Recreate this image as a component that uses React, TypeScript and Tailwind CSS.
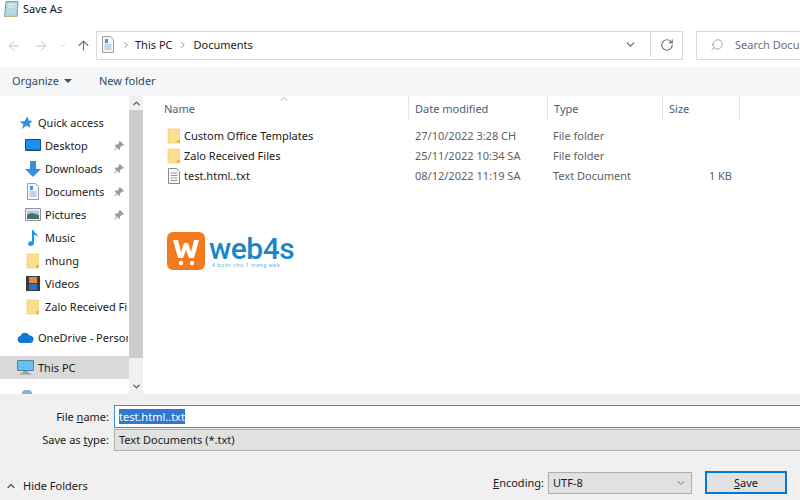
import React from 'react';
import { ArrowLeft, ArrowRight, ArrowUp, ChevronDown, ChevronRight, ChevronUp, RotateCw, Search } from 'lucide-react';

const font = "font-['Noto_Sans',sans-serif]";

const FolderIcon = () => (
  <svg width="14" height="16" viewBox="0 0 14 16" className="shrink-0">
    <path d="M1 1h11.5v14H1z" fill="#fcdf8c" stroke="#ecc666" strokeWidth="0.6" />
    <path d="M10 12h3v3h-3z" fill="#e9b949" />
  </svg>
);

const DocIcon = () => (
  <svg width="14" height="16" viewBox="0 0 14 16" className="shrink-0">
    <path d="M1.5.5h8l3 3v12h-11z" fill="#fafafa" stroke="#8a8a8a" />
    <path d="M3.5 5h7M3.5 7.5h7M3.5 10h7M3.5 12.500h7" stroke="#9a9a9a" />
  </svg>
);

const DocsIcon = () => (
  <svg width="14" height="17" viewBox="0 0 14 17" className="shrink-0">
    <path d="M1.5.5h8l3 3v13h-11z" fill="#f4f7fa" stroke="#9aa0a6" />
    <path d="M4 3h3v4H4z" fill="#3f9be0" />
    <path d="M3.5 9h7M3.5 11h7M3.5 13h7" stroke="#8fb4d0" />
  </svg>
);

const NotebookIcon = () => (
  <svg width="16" height="16" viewBox="0 0 16 16" className="shrink-0">
    <path d="M3 .5h12l-1 15H1.500z" fill="#b5d8de" stroke="#7e9ea6" />
    <path d="M1.500 15.500h12.500" stroke="#c9b27a" strokeWidth="1.500" />
    <path d="M5 3.500h7M5 6h7" stroke="#e3f1f3" />
  </svg>
);

const StarIcon = () => (
  <svg width="14" height="14" viewBox="0 0 14 14" className="shrink-0">
    <path d="M8.500.5l1.200 4 3.800.4-3 2.600 1 4.400-3.800-2.500L3 13l1.400-4.600L.8 5.600l4.600-.4z" fill="#2f8fe0" />
  </svg>
);

const DesktopIcon = () => (
  <svg width="16" height="13" viewBox="0 0 16 13" className="shrink-0">
    <path d="M.5.5h15v11H.5z" fill="#1c8ff0" stroke="#15507f" />
    <path d="M1 10.500h14v1.500H1z" fill="#15507f" />
  </svg>
);

const DownloadIcon = () => (
  <svg width="16" height="16" viewBox="0 0 16 16" className="shrink-0">
    <path d="M5 0h6v8h5l-8 8-8-8h5z" fill="#3a8ee0" />
  </svg>
);

const PicturesIcon = () => (
  <svg width="16" height="13" viewBox="0 0 16 13" className="shrink-0">
    <path d="M.5.5h15v12H.5z" fill="#eef2f5" stroke="#8c949b" />
    <path d="M2 2.500h12v4H2z" fill="#a9cdea" />
    <path d="M2 6.500l5-1.500 7 2v4H2z" fill="#47705f" />
  </svg>
);

const MusicIcon = () => (
  <svg width="12" height="16" viewBox="0 0 12 16" className="shrink-0">
    <path d="M5 0h1.600c.3 3 4.400 3.600 4.400 7-1-1.500-2.500-2-4-2.300V13c0 1.800-1.500 3-3.300 3S1 15 1 13.500 2.500 11 5 11.200z" fill="#1c97ea" />
  </svg>
);

const VideosIcon = () => (
  <svg width="14" height="15" viewBox="0 0 14 15" className="shrink-0">
    <path d="M0 0h14v15H0z" fill="#3b3b3b" />
    <path d="M3 1h8v6H3z" fill="#e0893c" />
    <path d="M3 8h8v6H3z" fill="#2f6fc0" />
  </svg>
);

const CloudIcon = () => (
  <svg width="17" height="11" viewBox="0 0 17 11" className="shrink-0">
    <path d="M4 11a3.500 3.500 0 01-.6-6.900A5 5 0 0112.500 3.500 3.800 3.800 0 0113.500 11z" fill="#0f78d4" />
  </svg>
);

const PcIcon = () => (
  <svg width="17" height="15" viewBox="0 0 17 15" className="shrink-0">
    <path d="M.5.5h16v10H.5z" fill="#63c3f2" stroke="#5f7f93" />
    <path d="M6 11h5v2H6zM3 13h11v1.500H3z" fill="#8fa3ae" />
  </svg>
);

const PinIcon = () => (
  <svg width="10" height="10" viewBox="0 0 10 10" className="shrink-0">
    <path d="M6 0l4 4-1 .7-1-.3-2 2 .2 1.800-.8.8-2-2L.8 9.600 0 9.200l2.600-2.800-2-2 .8-.8 1.800.2 2-2-.3-1z" fill="#9a9a9a" />
  </svg>
);

const NavItem = ({ icon, label, pinned, top }: { icon: React.ReactNode; label: string; pinned?: boolean; top?: boolean }) => (
  <div className={`flex items-center h-[23px] ${top ? 'pl-[17px] gap-[4px]' : 'pl-[25px] gap-[5px]'} ${pinned ? 'pr-[5px]' : 'pr-[1px]'}`}>
    <span className={`${top ? 'w-[17px]' : 'w-[15px]'} flex justify-center shrink-0`}>{icon}</span>
    <span className="flex-1 whitespace-nowrap overflow-hidden text-[#1a1a1a]">{label}</span>
    {pinned && <PinIcon />}
  </div>
);

const FileRow = ({ icon, name, date, type, size }: { icon: React.ReactNode; name: string; date: string; type: string; size?: string }) => (
  <div className="flex items-center h-[20px]">
    <div className="w-[272px] pl-[24px] flex items-center gap-[3px]">
      {icon}
      <span className="whitespace-nowrap text-[#1a1a1a]">{name}</span>
    </div>
    <div className="w-[138px] text-[#5f5f5f] whitespace-nowrap">{date}</div>
    <div className="w-[115px] text-[#5f5f5f] whitespace-nowrap">{type}</div>
    <div className="w-[64px] text-right text-[#5f5f5f]">{size}</div>
  </div>
);

const ColHeader = ({ label, width }: { label: string; width: string }) => (
  <div className={`${width} h-full pl-[6px] pt-[5px] border-r border-[#e5e5e5] text-[#4c607a]`}>{label}</div>
);

export default function App() {
  return (
    <div className={`w-[800px] h-[500px] overflow-hidden bg-white text-[11px] leading-[16px] flex flex-col ${font}`}>
      <div className="h-[31px] shrink-0 flex items-center pl-[3px] gap-[4px] pb-[14px] text-[#111]">
        <NotebookIcon />
        <span>Save As</span>
      </div>

      <div className="h-[29px] shrink-0 flex items-center">
        <div className="w-[96px] shrink-0 flex items-center pl-[6px] text-[#c4c4c4]">
          <ArrowLeft size={16} strokeWidth={1.5} />
          <ArrowRight size={16} strokeWidth={1.5} className="ml-[11px]" />
          <ChevronDown size={9} strokeWidth={2} className="ml-[9px] text-[#c8c8c8]" />
          <ArrowUp size={15} strokeWidth={1.8} className="ml-[9px] text-[#707070]" />
        </div>
        <div className="w-[587px] shrink-0 h-full border border-[#d9d9d9] flex items-center pl-[4px] pb-[2px] text-[#1a1a1a]">
          <DocsIcon />
          <ChevronRight size={10} strokeWidth={2} className="ml-[6px] text-[#777]" />
          <span className="ml-[4px]">This PC</span>
          <ChevronRight size={10} strokeWidth={2} className="ml-[5px] text-[#777]" />
          <span className="ml-[6px]">Documents</span>
          <ChevronDown size={13} strokeWidth={2.4} className="ml-auto mr-[13px] text-[#6a6a6a]" />
          <div className="w-[32px] h-full border-l border-[#d9d9d9] flex items-center justify-center">
            <RotateCw size={14} strokeWidth={2} className="text-[#707070]" />
          </div>
        </div>
        <div className="w-[120px] shrink-0 h-full ml-[13px] border border-[#d9d9d9] flex items-center pl-[13px] pb-[2px] gap-[11px] text-[#6d6d6d] whitespace-nowrap overflow-hidden">
          <Search size={14} strokeWidth={1.3} className="-scale-x-100 text-[#8a8a8a] shrink-0" />
          <span>Search Documents</span>
        </div>
      </div>

      <div className="h-[7px] shrink-0" />

      <div className="h-[29px] shrink-0 bg-[#f5f6f7] flex items-center pb-[2px] text-[#2f4a66]">
        <span className="ml-[12px]">Organize</span>
        <svg width="8" height="4" viewBox="0 0 8 4" className="ml-[5px]">
          <path d="M0 0h8L4 4z" fill="#3c4f63" />
        </svg>
        <span className="ml-[27px]">New folder</span>
      </div>

      <div className="flex-1 min-h-0 flex">
        <div className="w-[129px] shrink-0 pt-[15px] overflow-hidden">
          <NavItem icon={<StarIcon />} label="Quick access" top />
          <NavItem icon={<DesktopIcon />} label="Desktop" pinned />
          <NavItem icon={<DownloadIcon />} label="Downloads" pinned />
          <NavItem icon={<DocsIcon />} label="Documents" pinned />
          <NavItem icon={<PicturesIcon />} label="Pictures" pinned />
          <NavItem icon={<MusicIcon />} label="Music" />
          <NavItem icon={<FolderIcon />} label="nhung" />
          <NavItem icon={<VideosIcon />} label="Videos" />
          <NavItem icon={<FolderIcon />} label="Zalo Received Files" />
          <div className="h-[8px]" />
          <NavItem icon={<CloudIcon />} label="OneDrive - Personal" top />
          <div className="mt-[7px] bg-[#d9d9d9]">
            <NavItem icon={<PcIcon />} label="This PC" top />
          </div>
          <div className="mt-[11px] pl-[22px]">
            <div className="w-[10px] h-[4px] rounded-t-full bg-[#7fb2cf]" />
          </div>
        </div>

        <div className="w-[14px] shrink-0 flex flex-col bg-[#f0f0f0]">
          <div className="h-[14px] flex items-center justify-center">
            <ChevronUp size={11} strokeWidth={3} className="text-[#606060]" />
          </div>
          <div className="h-[248px] bg-[#cdcdcd]" />
          <div className="flex-1 flex items-end justify-center pb-[2px]">
            <ChevronDown size={11} strokeWidth={3} className="text-[#606060]" />
          </div>
        </div>

        <div className="flex-1 min-w-0 flex flex-col">
          <div className="relative h-[24px] shrink-0 flex pl-[15px]">
            <ChevronUp size={12} strokeWidth={1.5} className="absolute left-[135px] top-[-3px] text-[#9a9a9a]" />
            <ColHeader label="Name" width="w-[251px]" />
            <ColHeader label="Date modified" width="w-[139px]" />
            <ColHeader label="Type" width="w-[115px]" />
            <ColHeader label="Size" width="w-[77px]" />
          </div>
          <div className="pt-[6px]">
            <FileRow icon={<FolderIcon />} name="Custom Office Templates" date="27/10/2022 3:28 CH" type="File folder" />
            <FileRow icon={<FolderIcon />} name="Zalo Received Files" date="25/11/2022 10:34 SA" type="File folder" />
            <FileRow icon={<DocIcon />} name="test.html..txt" date="08/12/2022 11:19 SA" type="Text Document" size="1 KB" />
          </div>
          <div className="mt-[46px] ml-[24px] flex items-center gap-[4px]">
            <svg width="38" height="38" viewBox="0 0 38 38" className="shrink-0">
              <rect width="38" height="38" rx="6" fill="#f47a1f" />
              <path d="M6 8h5l3 12 3-9h4l3 9 3-12h5l-5 18h-5l-3-8-3 8h-5z" fill="#fff" />
              <circle cx="14" cy="31" r="2.200" fill="#fff" />
              <circle cx="25" cy="31" r="2.200" fill="#fff" />
            </svg>
            <div className="flex flex-col">
              <span className="font-['Roboto',sans-serif] font-medium text-[30px] leading-[27px] tracking-[-0.5px] text-[#1b87c9]">web4s</span>
              <span className="text-[5px] leading-[6px] tracking-[0.6px] text-[#5ca9d8] whitespace-nowrap pl-[3px]">4 bước cho 1 trang web</span>
            </div>
          </div>
        </div>
      </div>

      <div className="h-[106px] shrink-0 bg-[#f0f0f0] flex flex-col text-[#1a1a1a]">
        <div className="mt-[11px] flex items-center h-[23px]">
          <label className="w-[109px] shrink-0 text-right whitespace-nowrap">File <u>n</u>ame:</label>
          <div className="ml-[5px] w-[700px] shrink-0 h-full bg-white border border-[#3b8fd9] flex items-center pl-[4px]">
            <span className="bg-[#2f78d0] text-white leading-[15px]">test.html..txt</span>
          </div>
        </div>
        <div className="mt-[1px] flex items-center h-[22px]">
          <label className="w-[109px] shrink-0 text-right whitespace-nowrap">Save as <u>t</u>ype:</label>
          <div className="ml-[5px] w-[700px] shrink-0 h-full bg-[#e1e1e1] border border-[#adadad] flex items-center pl-[4px]">
            Text Documents (*.txt)
          </div>
        </div>
        <div className="mt-[20px] flex items-center h-[23px]">
          <ChevronUp size={12} strokeWidth={2.5} className="ml-[5px] mt-[6px] text-[#555]" />
          <span className="ml-[6px] mt-[6px]">Hide Folders</span>
          <span className="ml-auto"><u>E</u>ncoding:</span>
          <div className="ml-[4px] w-[144px] h-[22px] bg-[#e1e1e1] border border-[#adadad] flex items-center pl-[4px]">
            UTF-8
            <ChevronDown size={12} strokeWidth={1.5} className="ml-auto mr-[4px] text-[#555]" />
          </div>
          <button className="ml-[13px] mr-[13px] w-[82px] h-[23px] bg-[#e1e1e1] border-2 border-[#0078d7] flex items-center justify-center">
            <span><u>S</u>ave</span>
          </button>
        </div>
      </div>
    </div>
  );
}
